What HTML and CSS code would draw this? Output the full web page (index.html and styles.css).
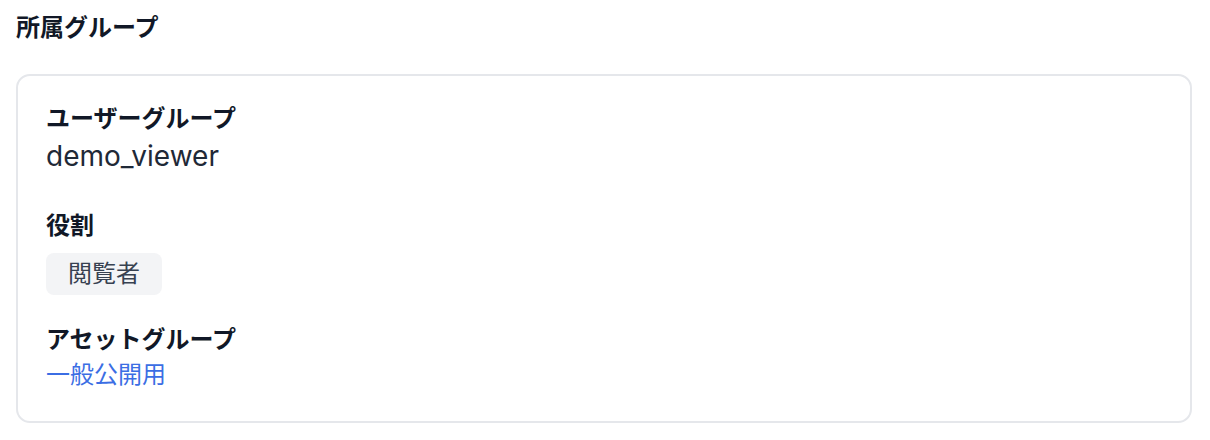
FILE: index.html
```html
<!DOCTYPE html>
<html lang="ja">
  <head>
    <meta charset="UTF-8" />
    <meta name="viewport" content="width=device-width, initial-scale=1.0" />
    <title>所属グループ</title>
    <link rel="stylesheet" href="styles.css">
  </head>
  <body>
    <section class="membership">
      <h2 class="section-title">所属グループ</h2>
      <div class="card">
        <div class="field">
          <p class="field-label">ユーザーグループ</p>
          <p class="field-value">demo_viewer</p>
        </div>
        <div class="field">
          <p class="field-label">役割</p>
          <span class="badge">閲覧者</span>
        </div>
        <div class="field">
          <p class="field-label">アセットグループ</p>
          <a class="field-link" href="#">一般公開用</a>
        </div>
      </div>
    </section>
  </body>
</html>
```

FILE: styles.css
```css
body {
  font-family: Inter, "Noto Sans CJK JP", sans-serif;
  background-color: #fff;
  color: #111827;
  margin: 0;
  padding: 10px 18px 0 16px;
}

.section-title {
  font-size: 24px;
  line-height: 36px;
  font-weight: 700;
  margin: 0;
}

.card {
  margin-top: 28px;
  border: 2px solid #e5e7eb;
  border-radius: 14px;
  padding: 28px 28px 31px;
  display: flex;
  flex-direction: column;
  gap: 30px;
}

.field {
  display: flex;
  flex-direction: column;
  align-items: flex-start;
}

.field-label {
  margin: 0;
  font-size: 24px;
  line-height: 30px;
  font-weight: 700;
  color: #111827;
}

.field-value {
  margin: 4px 0 7px;
  font-size: 28px;
  line-height: 36px;
  color: #1f2937;
}

.badge {
  margin-top: 12px;
  background-color: #f3f4f6;
  color: #374151;
  font-size: 24px;
  line-height: 42px;
  padding: 0 22px;
  border-radius: 8px;
}

.field-link {
  margin-top: 5px;
  font-size: 24px;
  line-height: 30px;
  color: #3b6ee4;
  text-decoration: none;
}
```
